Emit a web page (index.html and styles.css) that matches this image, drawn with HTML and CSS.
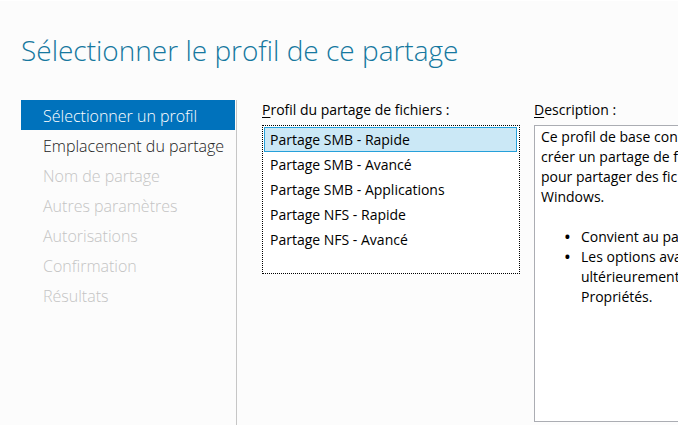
FILE: index.html
```html
<!DOCTYPE html>
<html lang="fr">
<head>
<meta charset="utf-8">
<title>Sélectionner le profil de ce partage</title>
<link rel="stylesheet" href="styles.css">
</head>
<body>
<main class="wizard">
  <h1 class="title">Sélectionner le profil de ce partage</h1>
  <div class="columns">
    <nav class="steps">
      <button class="step step-current" type="button">Sélectionner un profil</button>
      <button class="step" type="button">Emplacement du partage</button>
      <button class="step" type="button" disabled>Nom de partage</button>
      <button class="step" type="button" disabled>Autres paramètres</button>
      <button class="step" type="button" disabled>Autorisations</button>
      <button class="step" type="button" disabled>Confirmation</button>
      <button class="step" type="button" disabled>Résultats</button>
    </nav>
    <section class="field field-profiles">
      <label class="label" for="profile"><u>P</u>rofil du partage de fichiers :</label>
      <select class="profiles" id="profile" size="5">
        <option selected>Partage SMB - Rapide</option>
        <option>Partage SMB - Avancé</option>
        <option>Partage SMB - Applications</option>
        <option>Partage NFS - Rapide</option>
        <option>Partage NFS - Avancé</option>
      </select>
    </section>
    <section class="field field-description">
      <h2 class="label"><u>D</u>escription :</h2>
      <div class="description">
        <p>Ce profil de base con<br>créer un partage de f<br>pour partager des fic<br>Windows.</p>
        <ul>
          <li>Convient au pa</li>
          <li>Les options ava<br>ultérieurement<br>Propriétés.</li>
        </ul>
      </div>
    </section>
  </div>
</main>
</body>
</html>
```
FILE: styles.css
```css
* {
  box-sizing: border-box;
}

body {
  margin: 0;
  background: #fcfcfc;
  color: #000;
  font: 14px/20px "Open Sans", "Noto Sans", sans-serif;
}

.wizard {
  display: flex;
  flex-direction: column;
  min-height: 100vh;
  padding-left: 21px;
  border-top: 1px solid #fff;
  overflow: hidden;
}

.title {
  margin: 0;
  padding: 29px 0 30px;
  color: #16789f;
  font-size: 28px;
  font-weight: 300;
  line-height: 40px;
  white-space: nowrap;
}

.columns {
  flex: 1;
  display: grid;
  grid-template-columns: 216px 283px minmax(144px, 1fr);
}

.steps {
  display: flex;
  flex-direction: column;
  padding-right: 1px;
  border-right: 1px solid #c6c6c6;
}

.step {
  height: 30px;
  padding: 2px 0 0 22px;
  border: 0;
  background: none;
  color: #222;
  font: 300 16px/28px "Open Sans", "Noto Sans", sans-serif;
  text-align: left;
  white-space: nowrap;
}

.step:disabled {
  color: #c4c4c4;
}

.step-current {
  background: #0072bc;
  color: #fff;
}

.field {
  display: flex;
  flex-direction: column;
}

.field-profiles {
  padding-left: 25px;
}

.field-description {
  padding: 0 0 3px 14px;
}

.label {
  margin: 0 0 5px;
  font-size: 14px;
  font-weight: 400;
  line-height: 20px;
  white-space: nowrap;
}

.label u {
  text-underline-offset: 2px;
}

.profiles {
  height: 149px;
  padding: 1px;
  border: 1px dotted #000;
  border-radius: 0;
  outline: 0;
  background: #fff;
  color: #000;
  font: inherit;
  overflow: hidden;
}

.profiles option {
  height: 25px;
  min-height: 25px;
  margin-right: 1px;
  padding: 2px 5px;
  border: 1px solid transparent;
  line-height: 20px;
}

.profiles option:checked {
  border-color: #26a0da;
  background: #cbe8f6 linear-gradient(#cbe8f6, #cbe8f6);
  color: #000;
}

.description {
  flex: 1;
  margin-right: -1px;
  padding: 1px 6px;
  border: 1px solid #abadb3;
  background: #fff;
  white-space: nowrap;
}

.description p {
  margin: 0 0 20px;
}

.description ul {
  margin: 0;
  padding-left: 40px;
  list-style-type: "•   ";
}

.description li::marker {
  font-weight: 700;
}
```
